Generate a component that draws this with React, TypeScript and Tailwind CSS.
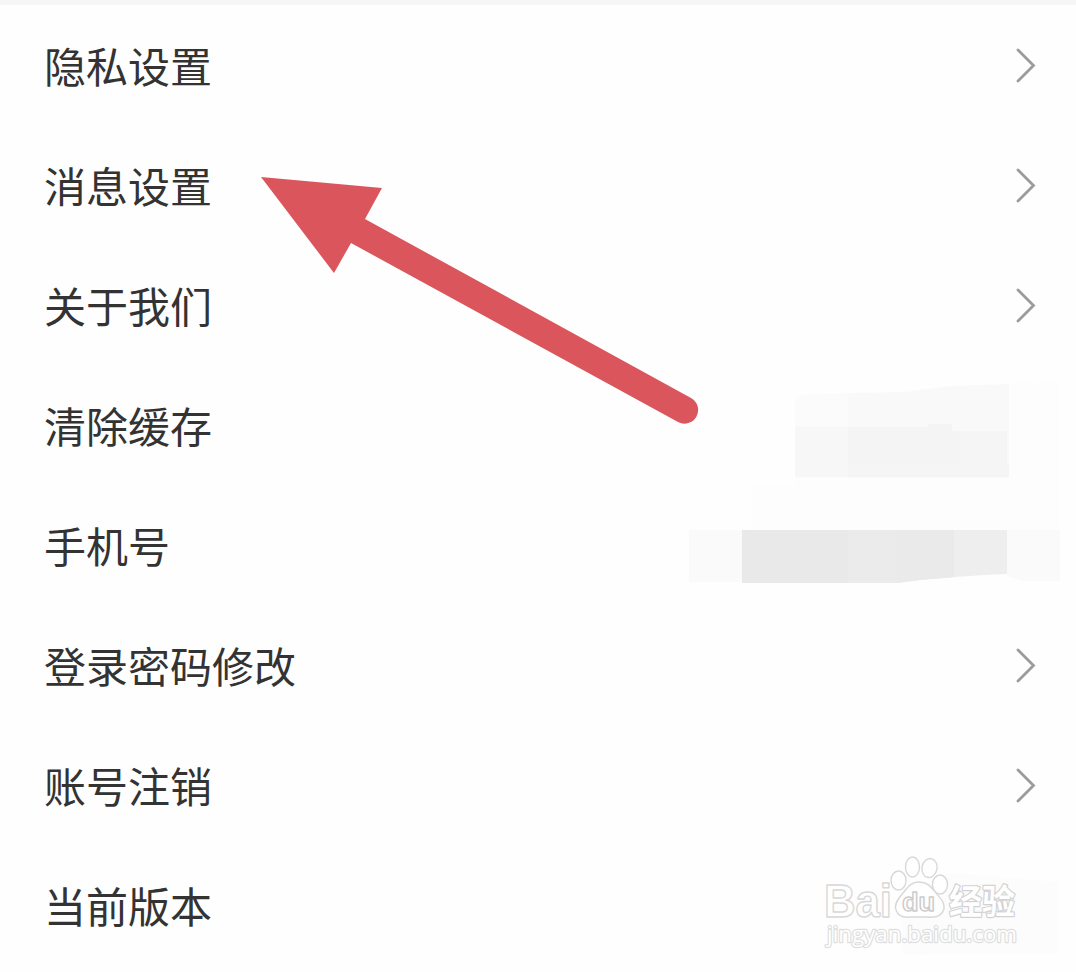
type SettingItem = {
  label: string;
  hasLink?: boolean;
};

const items: SettingItem[] = [
  { label: "隐私设置", hasLink: true },
  { label: "消息设置", hasLink: true },
  { label: "关于我们", hasLink: true },
  { label: "清除缓存" },
  { label: "手机号" },
  { label: "登录密码修改", hasLink: true },
  { label: "账号注销", hasLink: true },
  { label: "当前版本" },
];

const Chevron = () => (
  <svg width="22" height="36" viewBox="0 0 22 36" fill="none" aria-hidden="true">
    <path
      d="M3 3 18.5 18.5 3 34"
      stroke="#9b9b9b"
      strokeWidth="2.8"
      strokeLinecap="round"
    />
  </svg>
);

const SettingRow = ({ label, hasLink }: SettingItem) => (
  <li className="flex h-[120px] items-center justify-between pr-[39px] pl-11">
    <span className="text-[42px] leading-[60px] text-[#333333]">{label}</span>
    {hasLink && <Chevron />}
  </li>
);

// Grey patches over the private values on the right
const Smudges = () => (
  <svg
    className="pointer-events-none absolute top-[370px] left-[680px]"
    width="396"
    height="602"
    viewBox="680 370 396 602"
    aria-hidden="true"
  >
    <path d="M1009 383 1058 382V530H753V486H795V478H1009Z" fill="#fdfdfd" />
    <path d="M795 402Q796 397 804 395L848 393V478H795Z" fill="#fbfbfb" />
    <path d="M848 393 905 392 952 386 1009 384V478H848Z" fill="#f9f9f9" />
    <path d="M795 427H848V477H795Z" fill="#f7f7f7" />
    <path d="M848 427H928V424H952V431H1007V477H848Z" fill="#f4f4f4" />
    <path d="M960 431H1007V464H960Z" fill="#f5f5f5" />
    <path d="M848 464H1009V477H848Z" fill="#f5f5f5" />

    <path d="M689 530H742V582H689Z" fill="#fafafa" />
    <path d="M742 530H848V583H742Z" fill="#e9e9e9" />
    <path d="M848 530H954V577L920 580 897 583H848Z" fill="#ebebeb" />
    <path d="M897 530H956V577L920 580 897 583Z" fill="#eaeaea" />
    <path d="M954 530H1007V574L985 575 954 577Z" fill="#eeeeee" />
    <path d="M1007 530H1060V581H1023L1007 576Z" fill="#fafafa" />

    <path d="M948 873 1058 882V953L903 955V900Z" fill="#fcfcfc" />
  </svg>
);

const Arrow = () => (
  <svg
    className="pointer-events-none absolute top-[170px] left-[255px]"
    width="450"
    height="260"
    viewBox="255 170 450 260"
    aria-hidden="true"
  >
    <path
      d="M261 177 382 188 365 219 691 398A13.5 13.5 0 0 1 678 422L351 243 334 273Z"
      fill="#db565c"
    />
  </svg>
);

const Watermark = () => (
  <svg
    className="pointer-events-none absolute top-[850px] left-[815px]"
    width="215"
    height="105"
    viewBox="815 850 215 105"
    fill="#ffffff"
    stroke="#d8d8d8"
    strokeWidth="1.4"
    strokeLinejoin="round"
  >
    <text
      x="824"
      y="917"
      fontSize="46"
      fontWeight="700"
      fontFamily="Liberation Sans, sans-serif"
      textLength="68"
      lengthAdjust="spacingAndGlyphs"
    >
      Bai
    </text>
    <ellipse cx="898.5" cy="880.5" rx="7.5" ry="9.5" />
    <ellipse cx="912.5" cy="867" rx="7" ry="10" />
    <ellipse cx="929.5" cy="868" rx="7.5" ry="9.5" transform="rotate(12 929.5 868)" />
    <ellipse cx="940" cy="884.5" rx="7.5" ry="9.5" />
    <path d="M919 882C911 882 908 887 903 893C897 900 894 905 896 910C898 916 903 918 911 917H927C936 918 942 916 944 909C945 903 941 899 936 893C931 887 928 882 919 882Z" />
    <text
      x="902"
      y="911"
      fontSize="25"
      fontWeight="700"
      fontFamily="Liberation Sans, sans-serif"
      textLength="33"
      lengthAdjust="spacingAndGlyphs"
      stroke="#cccccc"
    >
      du
    </text>
    <text
      x="949"
      y="914"
      fontSize="34"
      fontWeight="700"
      fontFamily="Noto Sans CJK SC, sans-serif"
      textLength="66"
      lengthAdjust="spacingAndGlyphs"
      paintOrder="stroke"
      strokeWidth="2.4"
      stroke="#d2d2d2"
    >
      经验
    </text>
    <text
      x="827"
      y="942"
      fontSize="22"
      fontFamily="Open Sans, sans-serif"
      textLength="190"
      lengthAdjust="spacingAndGlyphs"
      paintOrder="stroke"
      strokeWidth="2.4"
      stroke="#dedede"
    >
      jingyan.baidu.com
    </text>
  </svg>
);

export default function App() {
  return (
    <div className="relative h-[972px] w-[1076px] overflow-hidden bg-[#fefefe] font-['Noto_Sans_CJK_SC',sans-serif]">
      <div className="h-[5px] bg-[#f6f6f6]" />
      <ul>
        {items.map((item) => (
          <SettingRow key={item.label} {...item} />
        ))}
      </ul>
      <Smudges />
      <Arrow />
      <Watermark />
    </div>
  );
}
